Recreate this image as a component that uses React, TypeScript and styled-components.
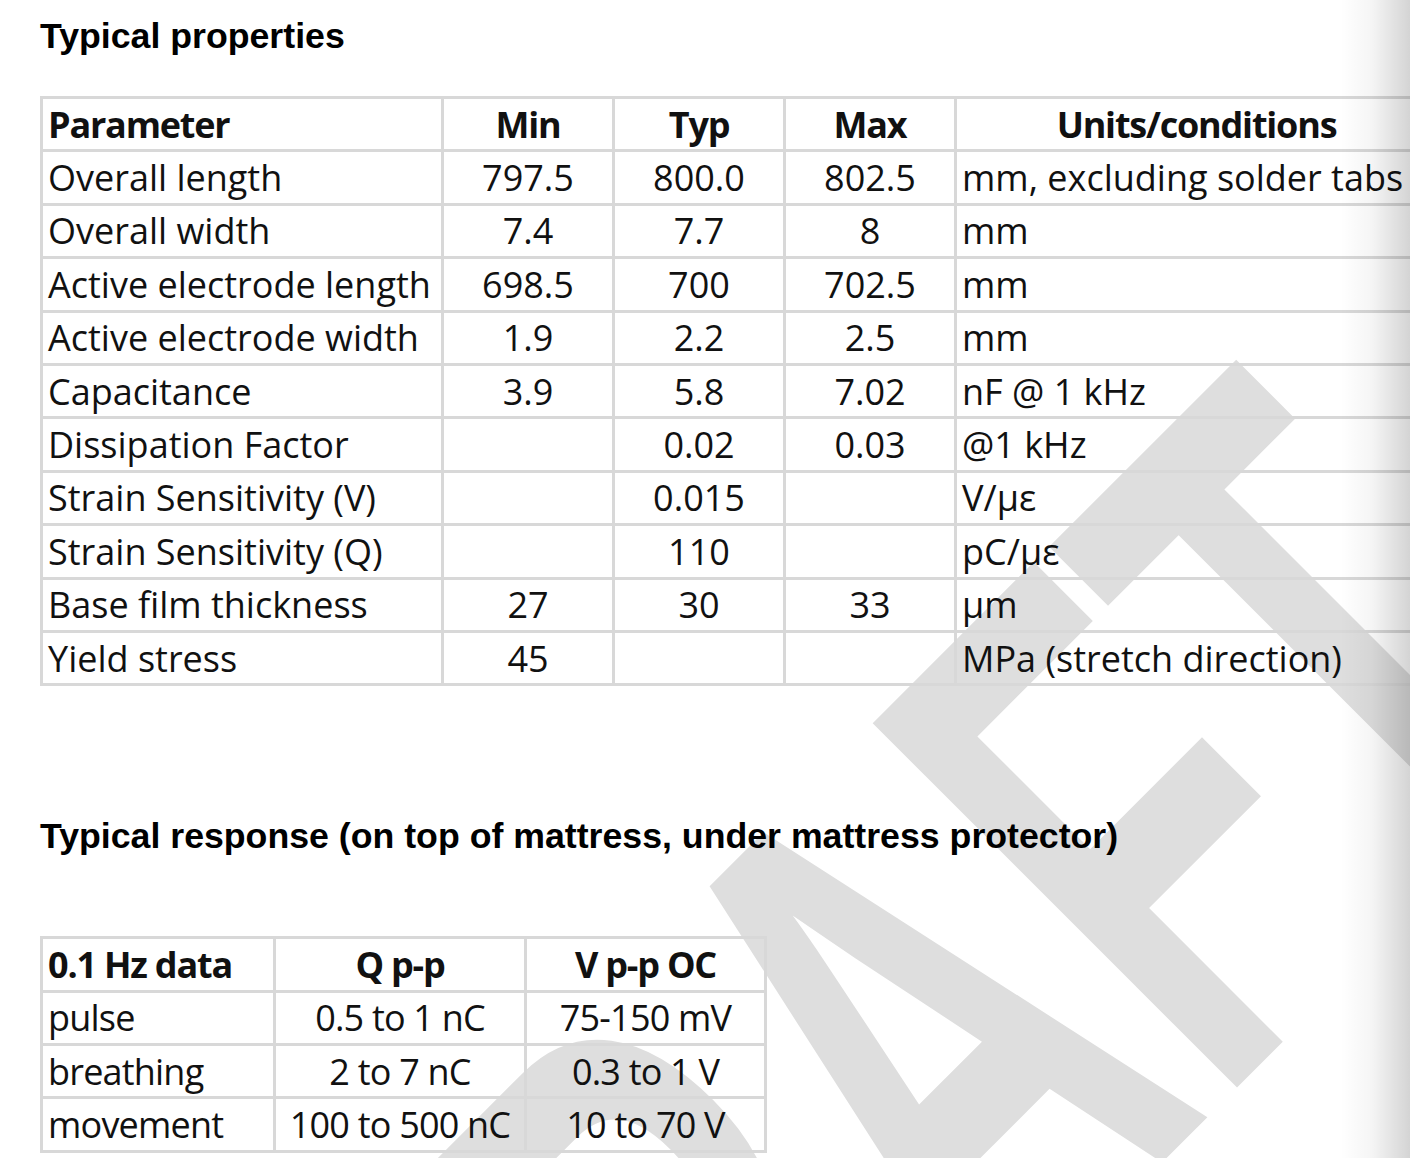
import React from 'react';
import styled, { createGlobalStyle } from 'styled-components';

const GlobalStyle = createGlobalStyle`
  html, body {
    margin: 0;
    padding: 0;
    background: #ffffff;
    overflow: hidden;
  }
`;

const Page = styled.div`
  position: relative;
  width: 100vw;
  height: 100vh;
  overflow: hidden;
  background: #ffffff;
`;

const Content = styled.div`
  position: relative;
  z-index: 1;
  padding: 16px 0 0 40px;
`;

// the grey "DRAFT" stamp lying under the whole sheet
const Watermark = styled.div`
  position: absolute;
  left: 79px;
  top: 1349px;
  z-index: 0;
  transform-origin: 0 0;
  transform: rotate(-45deg) scaleX(0.6);
  font-family: 'Liberation Sans', Arial, sans-serif;
  font-weight: 700;
  font-size: 749px;
  line-height: 1;
  color: #dedede;
  white-space: nowrap;
  pointer-events: none;
  user-select: none;
`;

// the scanned page fades to grey on its right edge
const EdgeShade = styled.div`
  position: absolute;
  top: 0;
  right: 0;
  bottom: 0;
  width: 70px;
  z-index: 2;
  pointer-events: none;
  background: linear-gradient(
    to right,
    rgba(0, 0, 0, 0) 0%,
    rgba(0, 0, 0, 0.04) 45%,
    rgba(0, 0, 0, 0.17) 100%
  );
`;

const Heading = styled.h2<{ $top: number; $bottom: number }>`
  margin: ${(p) => p.$top}px 0 ${(p) => p.$bottom}px;
  font-family: 'Liberation Sans', Arial, sans-serif;
  font-size: 35.7px;
  line-height: 40px;
  font-weight: 700;
  color: #000000;
  white-space: nowrap;
`;

const Sheet = styled.table<{ $tight?: boolean }>`
  border-collapse: collapse;
  table-layout: fixed;
  font-family: 'Open Sans', 'Liberation Sans', sans-serif;
  font-size: 36px;
  color: #111111;
  letter-spacing: ${(p) => (p.$tight ? '-0.8px' : '0')};
`;

const Row = styled.tr`
  height: 53.4px;
`;

const Cell = styled.td<{ $align?: 'left' | 'center'; $head?: boolean }>`
  border: 3px solid #d8d8d8;
  padding: 0 5px;
  text-align: ${(p) => p.$align || 'left'};
  font-weight: ${(p) => (p.$head ? 700 : 400)};
  letter-spacing: ${(p) => (p.$head ? '-1.2px' : 'inherit')};
  vertical-align: middle;
  white-space: nowrap;
  line-height: 1.25;
`;

const propertyCols = [401, 171, 171, 171, 482];
const propertyHead = ['Parameter', 'Min', 'Typ', 'Max', 'Units/conditions'];
const properties = [
  ['Overall length', '797.5', '800.0', '802.5', 'mm, excluding solder tabs'],
  ['Overall width', '7.4', '7.7', '8', 'mm'],
  ['Active electrode length', '698.5', '700', '702.5', 'mm'],
  ['Active electrode width', '1.9', '2.2', '2.5', 'mm'],
  ['Capacitance', '3.9', '5.8', '7.02', 'nF @ 1 kHz'],
  ['Dissipation Factor', '', '0.02', '0.03', '@1 kHz'],
  ['Strain Sensitivity (V)', '', '0.015', '', 'V/µε'],
  ['Strain Sensitivity (Q)', '', '110', '', 'pC/µε'],
  ['Base film thickness', '27', '30', '33', 'µm'],
  ['Yield stress', '45', '', '', 'MPa (stretch direction)'],
];

const responseCols = [233, 251, 240];
const responseHead = ['0.1 Hz data', 'Q p-p', 'V p-p OC'];
const responses = [
  ['pulse', '0.5 to 1 nC', '75-150 mV'],
  ['breathing', '2 to 7 nC', '0.3 to 1 V'],
  ['movement', '100 to 500 nC', '10 to 70 V'],
];

function propertyAlign(col: number, head: boolean): 'left' | 'center' {
  if (col === 0) return 'left';
  if (col === 4) return head ? 'center' : 'left';
  return 'center';
}

function PropertiesTable() {
  const width = propertyCols.reduce((a, b) => a + b, 0);
  return (
    <Sheet style={{ width }}>
      <colgroup>
        {propertyCols.map((w, i) => (
          <col key={i} style={{ width: w }} />
        ))}
      </colgroup>
      <tbody>
        <Row>
          {propertyHead.map((h, i) => (
            <Cell key={h} $head $align={propertyAlign(i, true)}>
              {h}
            </Cell>
          ))}
        </Row>
        {properties.map((r) => (
          <Row key={r[0]}>
            {r.map((v, i) => (
              <Cell key={i} $align={propertyAlign(i, false)}>
                {v}
              </Cell>
            ))}
          </Row>
        ))}
      </tbody>
    </Sheet>
  );
}

function ResponseTable() {
  const width = responseCols.reduce((a, b) => a + b, 0);
  return (
    <Sheet $tight style={{ width }}>
      <colgroup>
        {responseCols.map((w, i) => (
          <col key={i} style={{ width: w }} />
        ))}
      </colgroup>
      <tbody>
        <Row>
          {responseHead.map((h, i) => (
            <Cell key={h} $head $align={i === 0 ? 'left' : 'center'}>
              {h}
            </Cell>
          ))}
        </Row>
        {responses.map((r) => (
          <Row key={r[0]}>
            {r.map((v, i) => (
              <Cell key={i} $align={i === 0 ? 'left' : 'center'}>
                {v}
              </Cell>
            ))}
          </Row>
        ))}
      </tbody>
    </Sheet>
  );
}

export default function App() {
  return (
    <Page>
      <GlobalStyle />
      <Watermark aria-hidden>DRAFT</Watermark>
      <Content>
        <Heading $top={0} $bottom={40}>
          Typical properties
        </Heading>
        <PropertiesTable />
        <Heading $top={130} $bottom={80}>
          Typical response (on top of mattress, under mattress protector)
        </Heading>
        <ResponseTable />
      </Content>
      <EdgeShade />
    </Page>
  );
}
